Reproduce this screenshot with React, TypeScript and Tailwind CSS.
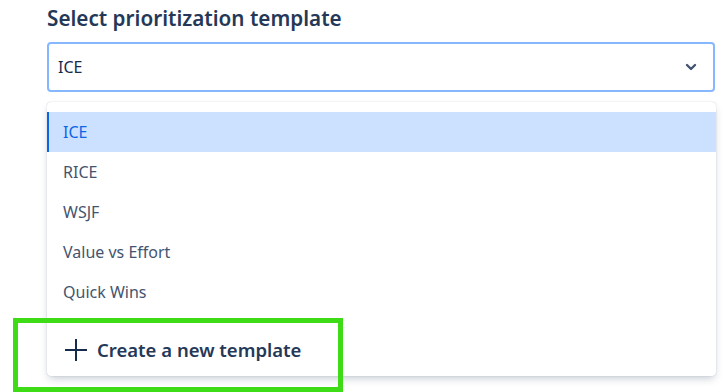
import React from "react";

const items = ["ICE", "RICE", "WSJF", "Value vs Effort", "Quick Wins"];

export default function App() {
  return (
    <div
      className="relative w-[725px] h-[392px] overflow-hidden bg-white"
      style={{ fontFamily: '"Noto Sans", "Open Sans", sans-serif' }}
    >
      <div className="pl-[47px] pr-[10px] pt-[3px]">
        <h2 className="text-[20.7px] leading-[30px] font-semibold text-[#253858]">
          Select prioritization template
        </h2>
        <div className="mt-[9px] h-[50px] flex items-center justify-between rounded-[4px] border-2 border-[#85b8ff] pl-[9px] pr-[16px]">
          <span className="text-[16px] text-[#172b4d]">ICE</span>
          <svg width="12" height="8" viewBox="0 0 12 8" className="text-[#44546f]">
            <path d="M2 2l4 4 4-4" fill="none" stroke="currentColor" strokeWidth="2.4" strokeLinecap="round" strokeLinejoin="round" />
          </svg>
        </div>
        <div className="mt-[10px] h-[274px] rounded-[4px] bg-white pt-[10px] shadow-[0_4px_8px_-2px_rgba(9,30,66,0.25),0_0_1px_rgba(9,30,66,0.31)] -mr-[1px]">
          {items.map((it, i) => (
            <div
              key={it}
              className={
                i === 0
                  ? "h-[40px] flex items-center pl-[14px] bg-[#cce0ff] border-l-2 border-[#0c66e4] text-[16px] text-[#0c66e4]"
                  : "h-[40px] flex items-center pl-[16px] text-[16px] text-[#44546f]"
              }
            >
              {it}
            </div>
          ))}
          <div className="mt-[16px] h-[44px] flex items-center pl-[17px] gap-[9px]">
            <svg width="24" height="24" viewBox="0 0 24 24">
              <path d="M12 2v20M2 12h20" stroke="#172b4d" strokeWidth="2" strokeLinecap="square" />
            </svg>
            <span className="text-[18.5px] font-semibold text-[#253858]">Create a new template</span>
          </div>
        </div>
      </div>
      <div className="absolute left-[13px] top-[318px] w-[330px] h-[74px] border-[5px] border-[#3ddc16]" />
    </div>
  );
}
